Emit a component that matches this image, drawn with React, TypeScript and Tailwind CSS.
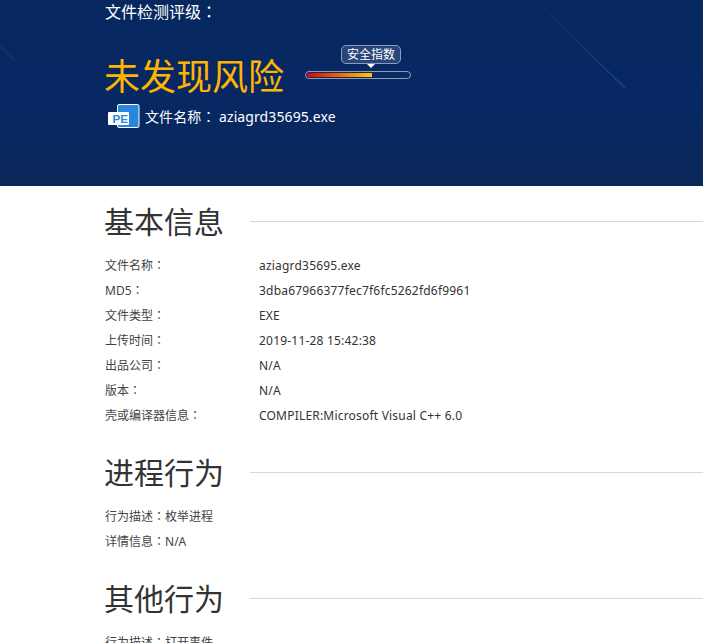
const font = '"Noto Sans", "Noto Sans CJK SC", sans-serif';

const rows: [string, string][] = [
  ["文件名称", "aziagrd35695.exe"],
  ["MD5", "3dba67966377fec7f6fc5262fd6f9961"],
  ["文件类型", "EXE"],
  ["上传时间", "2019-11-28 15:42:38"],
  ["出品公司", "N/A"],
  ["版本", "N/A"],
  ["壳或编译器信息", "COMPILER:Microsoft Visual C++ 6.0"],
];

function Colon() {
  return <span className="font-['Noto_Sans_CJK_TC'] leading-none">：</span>;
}

function Heading({ children }: { children: string }) {
  return (
    <div className="flex items-center">
      <h2 className="-ml-px w-[146px] shrink-0 text-[30px] leading-[40px] font-normal text-[#333333]">{children}</h2>
      <div className="mb-[2px] h-px flex-1 bg-[#d8d8d8]" />
    </div>
  );
}

function PeIcon() {
  return (
    <svg width="33" height="25" viewBox="0 0 33 25" className="shrink-0">
      <rect x="9.5" y="0.5" width="21.5" height="23" rx="1.5" fill="#2a86dc" stroke="#ffffff" strokeWidth="1" />
      <rect x="0" y="8" width="21" height="13" rx="1" fill="#ffffff" />
      <text x="4.5" y="18.5" fontFamily="Liberation Sans, sans-serif" fontSize="11.5" fontWeight="700" fill="#2a86dc">PE</text>
    </svg>
  );
}

export default function App() {
  return (
    <div className="h-[643px] w-[703px] overflow-hidden bg-white" style={{ fontFamily: font }}>
      <header className="relative h-[186px] overflow-hidden bg-[linear-gradient(180deg,#07275f_0%,#072863_55%,#0a2759_100%)]">
        <svg className="absolute inset-0" width="703" height="186" viewBox="0 0 703 186" aria-hidden="true">
          <defs>
            <linearGradient id="streak" x1="0" y1="0" x2="1" y2="1">
              <stop offset="0" stopColor="#1a4285" stopOpacity="0.1" />
              <stop offset="1" stopColor="#1d4a92" stopOpacity="0.9" />
            </linearGradient>
          </defs>
          <line x1="535" y1="0" x2="625" y2="88" stroke="url(#streak)" strokeWidth="1.2" />
          <line x1="0" y1="46" x2="15" y2="61" stroke="#1a4285" strokeWidth="1.2" opacity="0.6" />
          <line x1="85" y1="108" x2="108" y2="130" stroke="#12356f" strokeWidth="1.2" opacity="0.4" />
        </svg>
        <div className="relative pl-[105px]">
          <p className="pt-px text-[16px] leading-[22px] text-white">文件检测评级<Colon /></p>
          <div className="mt-[15px] flex items-start">
            <h1 className="-ml-px h-[54px] w-[201px] pt-[12px] text-[36px] leading-[54px] font-normal text-[#ffb400]">未发现风险</h1>
            <div className="flex w-[106px] flex-col">
              <div className="relative mt-[7px] ml-[36px] flex h-[19px] w-[60px] items-center justify-center rounded-[5px] border border-[#8b9dbd] bg-[#2a4577] text-[12px] leading-none text-white">
                安全指数
                <span className="absolute -bottom-[5px] left-1/2 h-0 w-0 -translate-x-1/2 border-x-[4px] border-t-[4px] border-x-transparent border-t-white" />
              </div>
              <div className="mt-[7px] h-[8px] w-full rounded-full border border-[#8b9dbd] bg-[#0a2a60] p-px">
                <div className="h-full w-[64%] rounded-l-full bg-[linear-gradient(90deg,#e00000,#ffcc00)]" />
              </div>
            </div>
          </div>
          <div className="mt-[12px] flex items-center pl-[3px] text-[14px] leading-[25px] tracking-[0.1px] text-white">
            <PeIcon />
            <span className="ml-[4px] w-[74px]">文件名称<Colon /></span>
            <span>aziagrd35695.exe</span>
          </div>
        </div>
      </header>

      <main className="pl-[105px] text-[12px] leading-[25px] text-[#333333]">
        <section className="pt-[16px]">
          <Heading>基本信息</Heading>
          <dl className="mt-[11px]">
            {rows.map(([k, v]) => (
              <div key={k} className="flex h-[25px]">
                <dt className="w-[154px] shrink-0 text-[#444444]">{k}<Colon /></dt>
                <dd className="tracking-[0.2px]">{v}</dd>
              </div>
            ))}
          </dl>
        </section>
        <section className="pt-[25px]">
          <Heading>进程行为</Heading>
          <div className="mt-[11px] text-[#444444]">
            <p>行为描述<Colon />枚举进程</p>
            <p>详情信息<Colon />N/A</p>
          </div>
        </section>
        <section className="pt-[25px]">
          <Heading>其他行为</Heading>
          <div className="mt-[11px] text-[#444444]">
            <p>行为描述<Colon />打开事件</p>
          </div>
        </section>
      </main>
    </div>
  );
}
